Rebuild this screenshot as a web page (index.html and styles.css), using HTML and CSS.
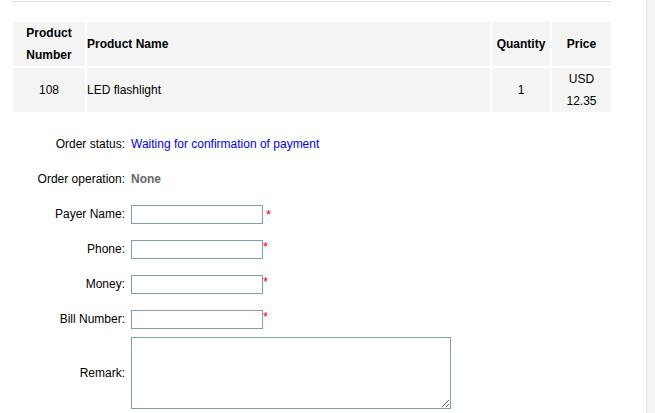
FILE: index.html
```html
<!DOCTYPE html>
<html>
<head>
<meta charset="utf-8">
<link rel="stylesheet" href="styles.css">
</head>
<body>
<div class="page">
  <main class="main">
    <div class="rule"></div>
    <table class="products">
      <thead>
        <tr>
          <th class="c-num">Product<br>Number</th>
          <th class="c-name">Product Name</th>
          <th class="c-qty">Quantity</th>
          <th class="c-price">Price</th>
        </tr>
      </thead>
      <tbody>
        <tr>
          <td class="c-num">108</td>
          <td class="c-name">LED flashlight</td>
          <td class="c-qty">1</td>
          <td class="c-price">USD<br>12.35</td>
        </tr>
      </tbody>
    </table>
    <form class="form">
      <label class="lbl">Order status:</label>
      <div class="val status">Waiting for confirmation of payment</div>
      <label class="lbl">Order operation:</label>
      <div class="val op">None</div>
      <label class="lbl">Payer Name:</label>
      <div class="val"><input class="field" type="text"><span class="req spaced">*</span></div>
      <label class="lbl">Phone:</label>
      <div class="val"><input class="field" type="text"><span class="req">*</span></div>
      <label class="lbl">Money:</label>
      <div class="val"><input class="field" type="text"><span class="req">*</span></div>
      <label class="lbl">Bill Number:</label>
      <div class="val"><input class="field" type="text"><span class="req">*</span></div>
      <label class="lbl remark-lbl">Remark:</label>
      <div class="val remark-val"><textarea class="area"></textarea></div>
    </form>
  </main>
  <aside class="side"></aside>
</div>
</body>
</html>
```

FILE: styles.css
```css
html, body {
  margin: 0;
  padding: 0;
  background: #fff;
}
body {
  font-family: "Liberation Sans", Arial, sans-serif;
  font-size: 12px;
  color: #000;
}
.page {
  display: flex;
  width: 655px;
  height: 413px;
  overflow: hidden;
}
.main {
  width: 646px;
  flex: none;
}
.side {
  flex: 1;
  border-left: 1px solid #e4e4e4;
  background: #f4f4f4;
}
.rule {
  margin: 1px 0 0 12px;
  width: 599px;
  border-top: 1px solid #dcdcdc;
}
.products {
  margin: 18px 0 0 11px;
  border-spacing: 2px;
  width: 602px;
}
.products th,
.products td {
  background: #f4f4f4;
  padding: 0;
  line-height: 22px;
  font-size: 12px;
}
.products thead th {
  height: 44px;
  font-weight: bold;
}
.products tbody td {
  height: 44px;
}
.c-num { width: 72px; text-align: center; }
.c-name { text-align: left; }
.products th.c-name { text-align: left; }
.c-qty { width: 58px; text-align: center; }
.c-price { width: 59px; text-align: center; }

.form {
  display: grid;
  grid-template-columns: 125px auto;
  column-gap: 6px;
  row-gap: 16px;
  margin-top: 21px;
  align-items: center;
}
.lbl {
  text-align: right;
  line-height: 19px;
}
.val {
  display: flex;
  align-items: flex-start;
  min-height: 19px;
  line-height: 19px;
}
.status { color: #0000ff; }
.op { color: #666; font-weight: bold; }
.field {
  box-sizing: border-box;
  width: 132px;
  height: 19px;
  margin: 0;
  padding: 1px 2px;
  border: 1px solid #7f9db9;
  font: 12px "Liberation Sans", Arial, sans-serif;
}
.req {
  color: #ff0000;
  line-height: 12px;
  font-size: 13px;
  margin-top: 1px;
}
.req.spaced { margin-left: 3px; margin-top: 4px; }
.remark-lbl { margin-top: -8px; }
.remark-val { margin-top: -8px; }
.area {
  box-sizing: border-box;
  width: 320px;
  height: 72px;
  margin: 0;
  border: 1px solid #7f9db9;
  padding: 2px;
  font: 12px "Liberation Sans", Arial, sans-serif;
}
```
